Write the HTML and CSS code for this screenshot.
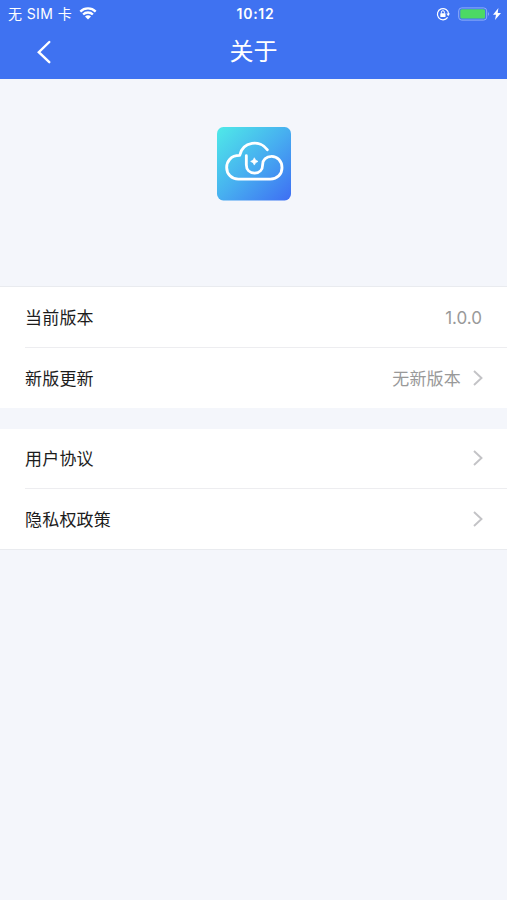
FILE: index.html
```html
<!DOCTYPE html>
<html lang="zh-CN">
<head>
<meta charset="utf-8">
<title>关于</title>
<link rel="stylesheet" href="styles.css">
</head>
<body>
<header class="header">
  <div class="status">
    <div class="status-left">
      <span>无 SIM 卡</span>
      <svg class="wifi" viewBox="0 0 18 13" width="18" height="13">
        <path d="M1.3 4.6a11 11 0 0 1 15.4 0M4.1 7.5a7 7 0 0 1 9.8 0" fill="none" stroke="#fff" stroke-width="2.3"/>
        <path d="M6 9.6a4.3 4.3 0 0 1 6 0L9 12.6z" fill="#fff"/>
      </svg>
    </div>
    <span class="time">10:12</span>
    <div class="status-right">
      <svg viewBox="0 0 14 14" width="14" height="14">
        <path d="M11.6 10.4A5.6 5.6 0 1 1 12.6 7" fill="none" stroke="#fff" stroke-width="1.2"/>
        <path d="M10.4 6.6h3.6l-1.8 2.6z" fill="#fff"/>
        <rect x="4.3" y="6.3" width="5.2" height="3.8" rx=".5" fill="#fff"/>
        <path d="M5.4 6.5V5.2a1.5 1.5 0 0 1 3 0v1.3" fill="none" stroke="#fff"/>
      </svg>
      <svg class="battery" viewBox="0 0 33 14" width="33" height="14">
        <rect x=".7" y=".9" width="28" height="12.2" rx="3" fill="none" stroke="#8fadf8" stroke-width="1"/>
        <rect x="2.3" y="2.3" width="24.8" height="9.2" rx="1.5" fill="#4cd964"/>
        <path d="M30 5q2 2 0 4z" fill="#8fadf8"/>
      </svg>
      <svg class="bolt" viewBox="0 0 8 12" width="8" height="12">
        <path d="M5.4 0 0 6.8h3L2 12 8 5H4.7z" fill="#fff"/>
      </svg>
    </div>
  </div>
  <div class="nav">
    <svg class="back" viewBox="0 0 14 24" width="14" height="24">
      <path d="M12.3 2 1.8 12.2l10.5 10" fill="none" stroke="#fff" stroke-width="2.4" stroke-linecap="round"/>
    </svg>
    <h1>关于</h1>
  </div>
</header>
<main>
  <section class="hero">
    <svg viewBox="36 36 222 220" width="74" height="73.5">
      <defs>
        <linearGradient id="tile" x1="0" y1="0" x2="1" y2="1">
          <stop offset="0" stop-color="#4feae8"/>
          <stop offset=".5" stop-color="#47aff0"/>
          <stop offset="1" stop-color="#3e6ef3"/>
        </linearGradient>
      </defs>
      <rect x="36" y="36" width="222" height="220" rx="19" fill="url(#tile)"/>
      <path d="M187 104C166 73 113 78 104 121C77 121 65 139 65 157C65 177 80 192 100 192H196C217 192 231 177 231 158C231 138 217 124 200 124C183 124 173 135 173 148C173 164 163 174 149 174C134 174 124 164 124 149V122" fill="none" stroke="#fff" stroke-width="8.5" stroke-linecap="round" stroke-linejoin="round"/>
      <path d="M148 128q2 9 11 11q-9 2-11 11q-2-9-11-11q9-2 11-11z" fill="#fff" stroke="#fff" stroke-width="2"/>
    </svg>
  </section>
  <section class="group first">
    <div class="row"><span>当前版本</span><span class="value number">1.0.0</span></div>
    <div class="row"><span>新版更新</span><span class="value">无新版本<svg class="chevron" viewBox="0 0 10 16" width="10" height="16"><path d="M1 1l7.5 7L1 15"/></svg></span></div>
  </section>
  <section class="group second">
    <div class="row"><span>用户协议</span><span class="value"><svg class="chevron" viewBox="0 0 10 16" width="10" height="16"><path d="M1 1l7.5 7L1 15"/></svg></span></div>
    <div class="row"><span>隐私权政策</span><span class="value"><svg class="chevron" viewBox="0 0 10 16" width="10" height="16"><path d="M1 1l7.5 7L1 15"/></svg></span></div>
  </section>
</main>
</body>
</html>
```
FILE: styles.css
```css
* { box-sizing: border-box; }
body {
  margin: 0;
  min-height: 900px;
  background: #f4f6fb;
  color: #1c1c1c;
  font-family: Inter, "Noto Sans CJK SC", sans-serif;
}
svg { display: block; flex: none; }
.header { height: 79px; background: #3f72f1; color: #fff; }
.status {
  display: grid;
  grid-template-columns: 1fr auto 1fr;
  align-items: center;
  height: 27px;
  padding: 0 6px 0 8px;
  font-size: 14px;
  line-height: 20px;
}
.status-left { display: flex; align-items: center; gap: 7px; letter-spacing: .4px; }
.status-right { display: flex; align-items: center; justify-content: flex-end; }
.battery { margin-left: 8px; }
.bolt { margin-left: 2px; }
.time { padding-left: 2px; font-weight: 600; letter-spacing: .7px; }
.nav {
  display: grid;
  grid-template-columns: 1fr auto 1fr;
  align-items: center;
  height: 50px;
}
.back { margin-left: 37px; }
h1 { margin: 0; font-size: 24px; line-height: 36px; font-weight: 400; }
.hero { display: flex; justify-content: center; height: 207px; padding-top: 48px; }
.group { background: #fff; padding-left: 25px; }
.first { border-top: 1px solid #e9ebef; height: 122px; }
.second { margin-top: 21px; border-bottom: 1px solid #e9ebef; height: 121px; }
.row {
  display: flex;
  justify-content: space-between;
  align-items: center;
  height: 61px;
  padding: 0 25px 2px 0;
  font-size: 17px;
  letter-spacing: .2px;
}
.second .row:first-child { height: 60px; }
.row:first-child { border-bottom: 1px solid #ededf0; }
.value { display: flex; align-items: center; color: #999; }
.number { padding-top: 4px; letter-spacing: 0; }
.chevron { margin: 0 -1px 0 12px; fill: none; stroke: #c3c3c6; stroke-width: 1.9; }
```
